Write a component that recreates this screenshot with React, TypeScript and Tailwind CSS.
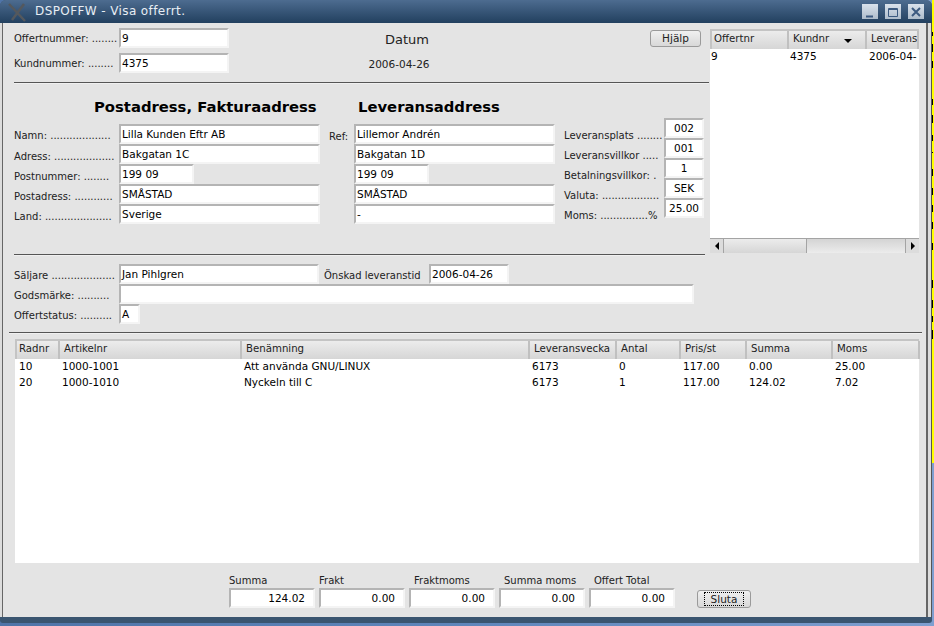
import React from 'react'

const FONT = 'font-["DejaVu_Sans",sans-serif]'

interface FieldProps {
  value?: string
  className?: string
  align?: 'left' | 'center' | 'right'
}

// sunken swing text field
function Field({ value = '', className = '', align = 'left' }: FieldProps) {
  const alignClass = align === 'center' ? 'justify-center' : align === 'right' ? 'justify-end pr-2' : 'pl-px'
  return (
    <div className={`flex h-5 items-center overflow-hidden whitespace-pre border-2 border-t-[#b4b4b4] border-l-[#b4b4b4] border-r-[#f4f4f4] border-b-[#f4f4f4] bg-white pt-0.5 text-[10.5px] text-black ${alignClass} ${className}`}>
      {value}
    </div>
  )
}

function Label({ text, className = '' }: { text: string; className?: string }) {
  return <span className={`whitespace-pre text-[10px] text-[#222] ${className}`}>{text}</span>
}

function Rule({ className = '' }: { className?: string }) {
  return <div className={`h-0.5 border-t border-t-[#555] border-b border-b-[#f0f0f0] ${className}`} />
}

function HeaderCell({ text, width, sort = false }: { text: string; width: number; sort?: boolean }) {
  return (
    <div
      style={{ width }}
      className="flex h-full shrink-0 items-center justify-between overflow-hidden whitespace-pre border-r-2 border-r-[#c0c0c0] bg-gradient-to-b from-[#ececec] to-[#d6d6d6] pb-0.5 pl-1 text-[10.2px] text-[#222] first:pl-0.5"
    >
      {text}
      {sort && <span className="mr-[13px] mt-1 border-x-[4px] border-t-[4px] border-x-transparent border-t-black" />}
    </div>
  )
}

function WinButton({ children }: { children: React.ReactNode }) {
  return (
    <div className="flex h-[15px] w-4 items-center justify-center bg-gradient-to-b from-[#d9e2ec] to-[#aebccb]">
      <svg width="12" height="12" viewBox="0 0 12 12" fill="none" stroke="#3c5a80">
        {children}
      </svg>
    </div>
  )
}

const addressRows = [
  { label: 'Namn: ...................', left: 'Lilla Kunden Eftr AB', right: 'Lillemor Andrén', ref: 'Ref:' },
  { label: 'Adress: ...................', left: 'Bakgatan 1C', right: 'Bakgatan 1D', ref: '' },
  { label: 'Postnummer: ........', left: '199 09', right: '199 09', ref: '', short: true },
  { label: 'Postadress: ............', left: 'SMÅSTAD', right: 'SMÅSTAD', ref: '' },
  { label: 'Land: .....................', left: 'Sverige', right: '-', ref: '' },
]

const termRows = [
  { label: 'Leveransplats ........', value: '002' },
  { label: 'Leveransvillkor .....', value: '001' },
  { label: 'Betalningsvillkor: .', value: '1' },
  { label: 'Valuta: ..................', value: 'SEK' },
  { label: 'Moms: ...............%', value: '25.00' },
]

const lineColumns = [
  { name: 'Radnr', width: 43 },
  { name: 'Artikelnr', width: 182 },
  { name: 'Benämning', width: 288 },
  { name: 'Leveransvecka', width: 87 },
  { name: 'Antal', width: 64 },
  { name: 'Pris/st', width: 66 },
  { name: 'Summa', width: 86 },
  { name: 'Moms', width: 87 },
]

const lines = [
  ['10', '1000-1001', 'Att använda GNU/LINUX', '6173', '0', '117.00', '0.00', '25.00'],
  ['20', '1000-1010', 'Nyckeln till C', '6173', '1', '117.00', '124.02', '7.02'],
]

const totals = [
  { label: 'Summa', value: '124.02', indent: 'pl-0' },
  { label: 'Frakt', value: '0.00', indent: 'pl-0' },
  { label: 'Fraktmoms', value: '0.00', indent: 'pl-[5px]' },
  { label: 'Summa moms', value: '0.00', indent: 'pl-[5px]' },
  { label: 'Offert Total', value: '0.00', indent: 'pl-[5px]' },
]

// bits of the window behind, showing along the right edge: [gap above, height]
const behindBits = [
  [32, 4], [8, 8], [9, 7], [31, 6], [10, 8], [12, 6], [11, 1], [16, 7], [12, 7], [10, 7], [10, 7], [14, 7], [30, 8], [12, 8], [8, 6], [8, 9],
]

export default function App() {
  return (
    <div className={`flex h-[626px] w-[934px] flex-col overflow-hidden bg-gradient-to-r from-[#4f74a8] via-[#5f86bb] to-[#7f9fd0] ${FONT}`}>
      <div className="flex">
        <div className="flex h-[623px] w-[932px] shrink-0 flex-col overflow-hidden rounded-t-[6px] rounded-b-[3px] bg-[#3a5570]">
          {/* title bar */}
          <div className="flex h-[23px] shrink-0 items-center bg-gradient-to-b from-[#4d6c90] to-[#22405f] pl-1.5 pr-2">
            <svg width="24" height="20" viewBox="0 0 24 20" fill="none" stroke="#54585d" strokeWidth="2.5">
              <path d="M3 2 L19 19 M18 2 L6 18" />
            </svg>
            <span className="-mt-0.5 ml-[5px] text-xs tracking-[0.4px] text-[#e8eef4]">DSPOFFW - Visa offerrt.</span>
            <div className="ml-auto flex gap-[7px]">
              <WinButton><path d="M2 10.5 H9" strokeWidth="2" /></WinButton>
              <WinButton><path d="M1.5 2.5 H10.5 V10.5 H1.5 Z M1.5 3.5 H10.5" /></WinButton>
              <WinButton><path d="M2 2 L10 10 M10 2 L2 10" strokeWidth="2" /></WinButton>
            </div>
          </div>

          {/* window frame */}
          <div className="flex h-[594px] shrink-0 border-r border-r-[#555] bg-[#dcdcdc] pl-0.5 pr-[3px]">
            <div className="flex flex-1 flex-col border-l border-r-2 border-l-[#666] border-r-[#666] bg-[#e4e4e4] pl-[6px] pr-1">
              {/* upper half */}
              <div className="flex h-[233px] shrink-0">
                <div className="flex w-[692px] shrink-0 flex-col pl-[5px]">
                  <div className="flex h-[59px] shrink-0 pt-[5px]">
                    <div className="flex w-[215px] shrink-0 flex-col gap-[5px]">
                      <div className="flex items-center">
                        <Label text="Offertnummer: ........" className="w-[105px]" />
                        <Field value="9" className="w-[110px]" />
                      </div>
                      <div className="flex items-center">
                        <Label text="Kundnummer: ........" className="w-[105px]" />
                        <Field value="4375" className="w-[110px]" />
                      </div>
                    </div>
                    <div className="ml-[109px] flex w-[140px] flex-col items-center pt-[2px]">
                      <span className="text-[13px] text-[#222]">Datum</span>
                      <span className="mr-4 mt-[7px] text-[10.5px] text-[#222]">2006-04-26</span>
                    </div>
                    <button className="ml-[174px] mt-[2px] h-[17px] w-[51px] shrink-0 rounded-[3px] border border-[#9a9a9a] bg-gradient-to-b from-[#f0f0f0] to-[#d8d8d8] text-[10.5px] text-[#222]">
                      Hjälp
                    </button>
                  </div>
                  <Rule className="-mr-[8px]" />

                  <div className="mt-[13px] flex text-[14.8px] font-bold leading-[20px] text-black">
                    <span className="ml-[80px] w-[264px]">Postadress, Fakturaadress</span>
                    <span>Leveransaddress</span>
                  </div>

                  <div className="mt-[6px] flex">
                    <div className="flex w-[541px] flex-col">
                      {addressRows.map(row => (
                        <div key={row.label} className="flex items-center">
                          <Label text={row.label} className="w-[105px] pt-1" />
                          <Field value={row.left} className={row.short ? 'w-[75px]' : 'w-[201px]'} />
                          {row.short && <div className="w-[126px]" />}
                          <Label text={row.ref} className="w-[34px] pl-[9px] pt-1.5" />
                          <Field value={row.right} className={row.short ? 'w-[75px]' : 'w-[201px]'} />
                        </div>
                      ))}
                    </div>
                    <div className="-mt-[5px] ml-[9px] flex flex-col">
                      {termRows.map(row => (
                        <div key={row.label} className="flex items-end">
                          <Label text={row.label} className="-mb-[5px] w-[100px]" />
                          <Field value={row.value} align="center" className="w-10" />
                        </div>
                      ))}
                    </div>
                  </div>
                </div>

                {/* offer list */}
                <div className="ml-[9px] mt-[6px] flex h-[224px] w-[209px] shrink-0 flex-col bg-white">
                  <div className="flex h-5 shrink-0 overflow-hidden border-t-2 border-l-2 border-t-[#c4c4c4] border-l-[#c4c4c4]">
                    <HeaderCell text="Offertnr" width={77} />
                    <HeaderCell text="Kundnr" width={78} sort />
                    <HeaderCell text="Leverans" width={52} />
                  </div>
                  <div className="flex h-4 items-center text-[10.5px] text-black">
                    <span className="w-[79px] pl-px">9</span>
                    <span className="w-[78px] pl-px">4375</span>
                    <span className="w-[50px] overflow-hidden whitespace-pre pl-0.5">2006-04-</span>
                  </div>
                  <div className="mt-auto flex h-[15px] items-stretch border-t border-t-[#a4a4a4] bg-[#e4e4e4]">
                    <div className="flex w-[14px] items-center justify-center border-r border-r-[#a4a4a4] bg-[#dcdcdc]">
                      <span className="border-y-[4px] border-r-[4px] border-y-transparent border-r-black" />
                    </div>
                    <div className="w-[83px] border-r border-r-[#a4a4a4] bg-gradient-to-b from-[#ececec] to-[#d6d6d6]" />
                    <div className="flex-1 bg-gradient-to-b from-[#d4d4d4] to-[#ececec]" />
                    <div className="flex w-[14px] items-center justify-center border-l border-l-[#a4a4a4] bg-[#dcdcdc]">
                      <span className="border-y-[4px] border-l-[4px] border-y-transparent border-l-black" />
                    </div>
                  </div>
                </div>
              </div>

              <Rule className="-mt-0.5 ml-[5px] mr-[217px]" />

              {/* seller */}
              <div className="mt-2 flex flex-col pl-[5px]">
                <div className="flex items-center">
                  <Label text="Säljare ...................." className="w-[105px] pt-0.5" />
                  <Field value="Jan Pihlgren" className="w-[200px]" />
                  <Label text="Önskad leveranstid" className="ml-[5px] w-[105px] pt-0.5" />
                  <Field value="2006-04-26" className="w-20" />
                </div>
                <div className="flex items-center">
                  <Label text="Godsmärke: .........." className="w-[105px] pt-0.5" />
                  <Field className="w-[575px]" />
                </div>
                <div className="flex items-center">
                  <Label text="Offertstatus: .........." className="w-[105px] pt-0.5" />
                  <Field value="A" className="w-[21px]" />
                </div>
              </div>

              <Rule className="mt-2" />

              {/* order lines */}
              <div className="ml-[6px] mt-[5px] flex h-[224px] w-[904px] shrink-0 flex-col bg-white">
                <div className="flex h-5 shrink-0 border-t-2 border-l-2 border-t-[#c4c4c4] border-l-[#c4c4c4]">
                  {lineColumns.map(col => (
                    <HeaderCell key={col.name} text={col.name} width={col.width} />
                  ))}
                </div>
                <div>
                  {lines.map(line => (
                    <div key={line[0]} className="flex h-4 items-center text-[10.5px] text-black">
                      {line.map((cell, index) => (
                        <span key={index} style={{ width: lineColumns[index].width }} className="shrink-0 pl-1">
                          {cell}
                        </span>
                      ))}
                    </div>
                  ))}
                </div>
              </div>

              {/* totals */}
              <div className="ml-[220px] mt-2.5 flex items-end">
                <div className="flex gap-1">
                  {totals.map(total => (
                    <div key={total.label} className="flex w-[86px] flex-col">
                      <Label text={total.label} className={`text-[10.5px] leading-[15px] ${total.indent}`} />
                      <Field value={total.value} align="right" />
                    </div>
                  ))}
                </div>
                <button className="ml-[22px] flex h-[18px] w-[54px] items-center justify-center rounded-[3px] border border-[#9a9a9a] bg-gradient-to-b from-[#f0f0f0] to-[#d8d8d8] text-[10.5px] text-[#222]">
                  <span className="border border-dotted border-black px-1.5 leading-[12px]">Sluta</span>
                </button>
              </div>
            </div>
          </div>
        </div>

        {/* whatever is behind the window on the right */}
        <div className="flex h-[463px] w-0.5 flex-col bg-[#ffff00]">
          {behindBits.map(([gap, height], index) => (
            <div key={index} style={{ marginTop: gap, height }} className="w-px shrink-0 bg-black" />
          ))}
        </div>
      </div>
    </div>
  )
}
